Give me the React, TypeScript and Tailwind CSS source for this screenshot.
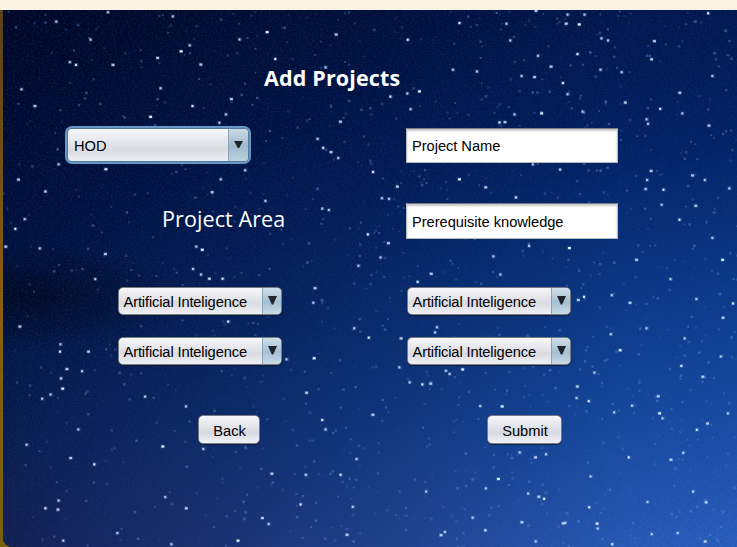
import React from "react";

// Bright stars on a 1568 x 1568 sky grid, as x, y pairs.
const bright = [
  [568,92],[510,113],[193,114],[335,166],[586,169],[693,193],[427,185],[149,178],[162,186],[240,186],[368,47],[230,35],[385,147],[404,130],[120,62],[715,99],[868,114],[1078,68],[1204,68],[1086,116],[978,66],[1140,31],[1244,42],[1208,42],[1232,70],[1280,110],[1294,116],[1392,118],[1507,38],[1145,160],[1172,191],[1278,200],[1229,155],[1386,170],[1323,207],[964,200],[892,262],[867,268],[874,313],[724,349],[831,277],[46,256],[74,304],[342,253],[410,304],[492,284],[481,328],[467,352],[320,335],[1015,205],[1110,218],[1137,221],[1198,238],[1208,270],[1330,294],[1376,342],[1405,312],[1446,266],[1452,325],[1516,218],[1152,325],[1240,320],[1095,328],[1074,350],[1063,351],[1379,355],[1508,360],[676,398],[688,424],[704,436],[720,453],[125,471],[225,485],[522,488],[470,514],[39,515],[97,549],[53,628],[12,707],[85,712],[33,656],[224,728],[203,800],[418,707],[430,716],[411,771],[428,787],[445,799],[474,799],[565,576],[451,551],[686,598],[794,493],[845,535],[828,570],[813,568],[977,514],[1374,542],[1377,516],[1385,490],[1412,544],[1408,587],[1473,503],[1500,516],[1098,566],[1033,537],[1192,486],[1134,471],[1211,711],[1126,705],[810,738],[826,697],[783,672],[763,762],[1354,745],[1427,800],[1446,630],[1480,590],[1516,682],[1552,540],[1537,745],[1050,735],[1065,787],[917,785],[889,808],[700,602],[42,936],[129,987],[128,1008],[142,1058],[130,1085],[175,1064],[133,1114],[108,1131],[90,1143],[188,1008],[486,922],[667,868],[670,826],[754,941],[785,968],[853,970],[850,1053],[610,1030],[668,1027],[309,1137],[396,1165],[652,1126],[686,1204],[693,1231],[793,1189],[759,1316],[725,1361],[578,1358],[651,1361],[167,1231],[346,1280],[433,1287],[57,1275],[150,1313],[201,1331],[352,1425],[396,1457],[125,1435],[97,1457],[123,1461],[250,1528],[135,1550],[506,1550],[365,1560],[572,1502],[558,1485],[640,1446],[751,1453],[738,1533],[872,1096],[899,1102],[916,1100],[957,1072],[949,1063],[984,1059],[926,953],[930,938],[1230,860],[1243,851],[1302,846],[1340,868],[1482,857],[1560,870],[1538,911],[1376,941],[1300,958],[1319,1004],[1457,970],[1534,1022],[1495,1080],[1450,1049],[1265,1068],[1228,1108],[1227,1141],[1253,1150],[1400,1136],[1345,1163],[1307,1182],[1403,1185],[1410,1199],[1549,1185],[1505,1214],[1483,1232],[1162,1302],[1139,1311],[1106,1297],[1338,1311],[1427,1318],[1454,1298],[1257,1366],[1060,1373],[1034,1400],[1124,1415],[1146,1424],[1158,1430],[1475,1409],[1502,1440],[1378,1439],[1254,1454],[1198,1500],[1203,1499],[1272,1515],[1270,1501],[1442,1528],[1387,1531],[1500,1552],[1303,1560],[1140,1552],[938,1534],[947,1525],[1033,1520],[1110,1497],[1006,1484],[1022,1164],[1068,1165],[907,1409],
];

// Deterministic scatter for the faint background stars.
const faint = (() => {
  let s = 71;
  const next = () => {
    s = (s * 16807) % 2147483647;
    return s / 2147483647;
  };
  return Array.from({ length: 1150 }, () => {
    const x = Math.pow(next(), 0.78) * 1568;
    return { x, y: 30 + next() * 1538, o: 0.1 + next() * 0.34, w: 3.5 + next() * 2.5 };
  });
})();

function Sky() {
  return (
    <svg className="absolute -left-[3px] -top-[10px]" width="737" height="547" viewBox="0 0 1568 1568" preserveAspectRatio="none" aria-hidden="true">
      <defs>
        <linearGradient id="west" x1="0" y1="0" x2="0" y2="1">
          <stop offset="0" stopColor="#010620" />
          <stop offset=".35" stopColor="#020d37" />
          <stop offset=".6" stopColor="#031440" />
          <stop offset=".8" stopColor="#0a1c4c" />
          <stop offset="1" stopColor="#151f50" />
        </linearGradient>
        <linearGradient id="east" x1="0" y1="0" x2="0" y2="1">
          <stop offset="0" stopColor="#02174c" />
          <stop offset=".25" stopColor="#032264" />
          <stop offset=".5" stopColor="#0b3886" />
          <stop offset=".75" stopColor="#174ca4" />
          <stop offset="1" stopColor="#2c61c0" />
        </linearGradient>
        <linearGradient id="sweep" x1="0" y1="0" x2="1" y2="0">
          <stop offset="0" stopColor="#fff" stopOpacity="0" />
          <stop offset=".46" stopColor="#fff" stopOpacity=".46" />
          <stop offset=".85" stopColor="#fff" stopOpacity=".93" />
          <stop offset="1" stopColor="#fff" />
        </linearGradient>
        <radialGradient id="shade">
          <stop offset="0" stopColor="#00020f" stopOpacity=".6" />
          <stop offset="1" stopColor="#00020f" stopOpacity="0" />
        </radialGradient>
        <mask id="fade" style={{ maskType: "alpha" }}>
          <rect width="1568" height="1568" fill="url(#sweep)" />
        </mask>
        <filter id="grain" x="0" y="0" width="100%" height="100%" colorInterpolationFilters="sRGB">
          <feTurbulence type="fractalNoise" baseFrequency="0.22" numOctaves="2" seed="4" />
          <feColorMatrix values="0 0 0 0 0.1  0 0 0 0 0.24  0 0 0 0 0.56  1.4 0 0 0 -0.6" />
        </filter>
      </defs>
      <rect width="1568" height="1568" fill="url(#west)" />
      <rect width="1568" height="1568" fill="url(#east)" mask="url(#fade)" />
      <ellipse cx="60" cy="850" rx="330" ry="150" fill="url(#shade)" />
      <rect width="1568" height="1568" filter="url(#grain)" opacity=".6" />
      {faint.map((f, i) => (
        <rect key={i} x={f.x} y={f.y} width={f.w} height={f.w * 1.3} fill="#6a96e0" opacity={f.o} />
      ))}
      {bright.map(([x, y], i) => (
        <g key={i}>
          <rect x={x - 4} y={y - 5} width="8" height="10" fill="#7fb0ec" opacity=".35" />
          <rect x={x - 2.5} y={y - 3} width={i % 3 === 0 ? 6 : 4} height="6" fill="#e4f2ff" opacity={i % 4 === 0 ? 1 : 0.75} />
        </g>
      ))}
    </svg>
  );
}

function AreaSelect() {
  return (
    <div className="flex h-[28px] w-[164px] overflow-hidden rounded-[5px] border border-[#777b82] bg-linear-to-b from-[#f8f8fa] via-[#d9dbe1] via-60% to-[#f0f1f5] shadow-[0_1px_1px_rgba(20,25,40,.7)]">
      <span className="w-[143px] pl-[4.5px] pt-px text-[14.67px] leading-[26px] tracking-[-0.13px] whitespace-nowrap">Artificial Inteligence</span>
      <span className="flex flex-1 justify-center border-l border-[#8ba4b8] bg-linear-to-b from-[#d0dfe9] via-[#a5bfd3] via-55% to-[#c9dbe7] pt-[8px]">
        <svg width="9" height="9" viewBox="0 0 9 9"><path d="M0 0h9L5.2 8.5H3.8z" fill="#20252a" /></svg>
      </span>
    </div>
  );
}

function Field({ text, height }: { text: string; height: string }) {
  return (
    <div className={"flex w-[212px] items-center border border-[#b5b8be] border-t-[#777b82] bg-white pl-[5px] pt-px text-[14.67px] leading-[20px] tracking-[-0.04px] shadow-[inset_0_2px_2px_#c9c9cc] " + height}>
      {text}
    </div>
  );
}

function PushButton({ text, width }: { text: string; width: string }) {
  return (
    <button className={"h-[29px] rounded-[5px] border border-[#777b82] bg-linear-to-b from-[#f8f8fa] via-[#d7d9e0] via-60% to-[#f3f4f8] pt-[2px] pl-px text-[14.67px] leading-[27px] shadow-[0_1px_1px_rgba(20,25,40,.7)] " + width}>
      {text}
    </button>
  );
}

export default function App() {
  return (
    <div className="h-[547px] w-[737px] overflow-hidden bg-linear-to-b from-[#574019] via-[#89600b] via-55% to-[#78600b] pl-[3px] font-['Liberation_Sans',Arial,sans-serif] text-black">
      <div className="-ml-[3px] h-[10px] bg-[#faf3e3]" />
      <main className="relative h-[537px] w-[734px] overflow-hidden rounded-bl-[9px] bg-[#03153f]">
        <Sky />
        <div className="relative flex h-full flex-col">
          <h1 className="h-[116px] pl-[261px] pt-[52px] font-['Open_Sans','Noto_Sans',sans-serif] text-[21.5px] leading-[32px] font-bold text-white">
            <span className="inline-block tracking-[0.15px] whitespace-nowrap">Add Projects</span>
          </h1>
          <div className="flex h-[77px] pl-[62px]">
            <div className="w-[341px]">
              <div className="h-[38px] w-[186px] rounded-[7px] border-2 border-[#6598c5] bg-[#55779b] p-px">
                <div className="flex h-full overflow-hidden rounded-[4px] bg-linear-to-b from-[#f7f7fa] via-[#d9dce2] via-65% to-[#eeeff3]">
                  <span className="w-[160px] pl-[6px] pt-[2px] text-[14.67px] leading-[31px]">HOD</span>
                  <span className="flex flex-1 justify-center border-l border-[#8ba4b8] bg-linear-to-b from-[#cad9e5] via-[#9fb9cd] via-55% to-[#bed2df] pt-[12px]">
                    <svg width="9" height="8" viewBox="0 0 9 8"><path d="M0 0h9L5.2 7H3.8z" fill="#20252a" /></svg>
                  </span>
                </div>
              </div>
            </div>
            <div className="pt-[2px]"><Field text="Project Name" height="h-[35px]" /></div>
          </div>
          <div className="flex h-[84px] pl-[159px]">
            <h2 className="w-[244px] font-['Open_Sans','Noto_Sans',sans-serif] text-[21.5px] leading-[32px] tracking-[0.1px] font-normal text-white">Project Area</h2>
            <Field text="Prerequisite knowledge" height="h-[36px]" />
          </div>
          <div className="grid h-[128px] grid-cols-[289px_164px] grid-rows-[50px_50px] pl-[115px]">
            <AreaSelect /><AreaSelect /><AreaSelect /><AreaSelect />
          </div>
          <div className="flex pl-[195px]">
            <div className="w-[289px]"><PushButton text="Back" width="w-[62px]" /></div>
            <PushButton text="Submit" width="w-[75px]" />
          </div>
        </div>
      </main>
    </div>
  );
}
